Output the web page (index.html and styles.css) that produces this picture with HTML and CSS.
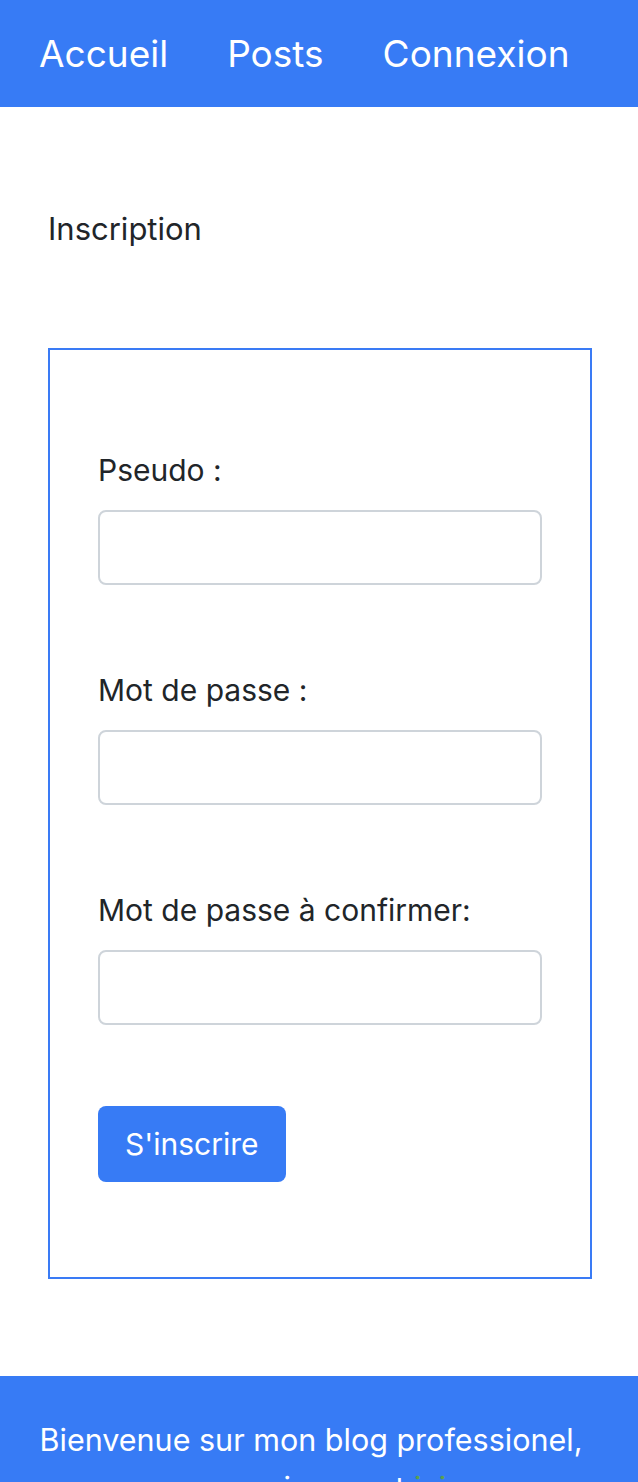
FILE: index.html
```html
<!DOCTYPE html>
<html lang="fr">
<head>
<meta charset="utf-8">
<title>Inscription</title>
<link rel="stylesheet" href="styles.css">
</head>
<body>
<header class="topbar">
  <nav class="nav">
    <a class="nav-link" href="#">Accueil</a>
    <a class="nav-link" href="#">Posts</a>
    <a class="nav-link" href="#">Connexion</a>
  </nav>
</header>
<main class="main">
  <p class="page-title">Inscription</p>
  <form class="card">
    <div class="field">
      <label class="field-label" for="pseudo">Pseudo :</label>
      <input class="field-input" id="pseudo" type="text">
    </div>
    <div class="field">
      <label class="field-label" for="pass">Mot de passe :</label>
      <input class="field-input" id="pass" type="password">
    </div>
    <div class="field">
      <label class="field-label" for="pass2">Mot de passe à confirmer:</label>
      <input class="field-input" id="pass2" type="password">
    </div>
    <button class="btn" type="button">S'inscrire</button>
  </form>
</main>
<footer class="footer">
  <p class="footer-text">Bienvenue sur mon blog professionel, mon univers est <a class="footer-link" href="#">ici</a></p>
</footer>
</body>
</html>
```
FILE: styles.css
```css
html, body {
  margin: 0;
  padding: 0;
}
body {
  font-family: Inter, "Liberation Sans", sans-serif;
  color: #212529;
  background: #fff;
}
.topbar {
  background: #377bf5;
  height: 107px;
  display: flex;
  align-items: center;
}
.nav {
  display: flex;
  gap: 59px;
  padding-left: 39px;
}
.nav-link {
  color: #fff;
  text-decoration: none;
  font-size: 37px;
  line-height: 1;
}
.main {
  padding: 0 46px 0 48px;
}
.page-title {
  margin: 0;
  padding-top: 99px;
  font-size: 31px;
  line-height: 45px;
}
.card {
  margin-top: 97px;
  border: 2px solid #3a7bf5;
  padding: 98px 48px 95px;
  display: flex;
  flex-direction: column;
  align-items: flex-start;
}
.field {
  display: flex;
  flex-direction: column;
  width: 100%;
  margin-bottom: 83px;
}
.field:last-of-type {
  margin-bottom: 81px;
}
.field-label {
  font-size: 30px;
  line-height: 45px;
  margin-bottom: 17px;
}
.field-input {
  box-sizing: border-box;
  height: 75px;
  width: 100%;
  border: 2px solid #ced4da;
  border-radius: 8px;
  background: #fff;
  margin: 0;
}
.btn {
  background: #377bf5;
  color: #fff;
  border: 0;
  border-radius: 8px;
  height: 76px;
  padding: 0 27px;
  font-family: inherit;
  font-size: 30px;
}
.footer {
  margin-top: 97px;
  background: #377bf5;
  padding: 40px 46px 60px 30px;
}
.footer-text {
  margin: 0;
  color: #fff;
  text-align: center;
  font-size: 30.5px;
  line-height: 48px;
}
.footer-link {
  color: #5aa14c;
  text-decoration: none;
}
```
